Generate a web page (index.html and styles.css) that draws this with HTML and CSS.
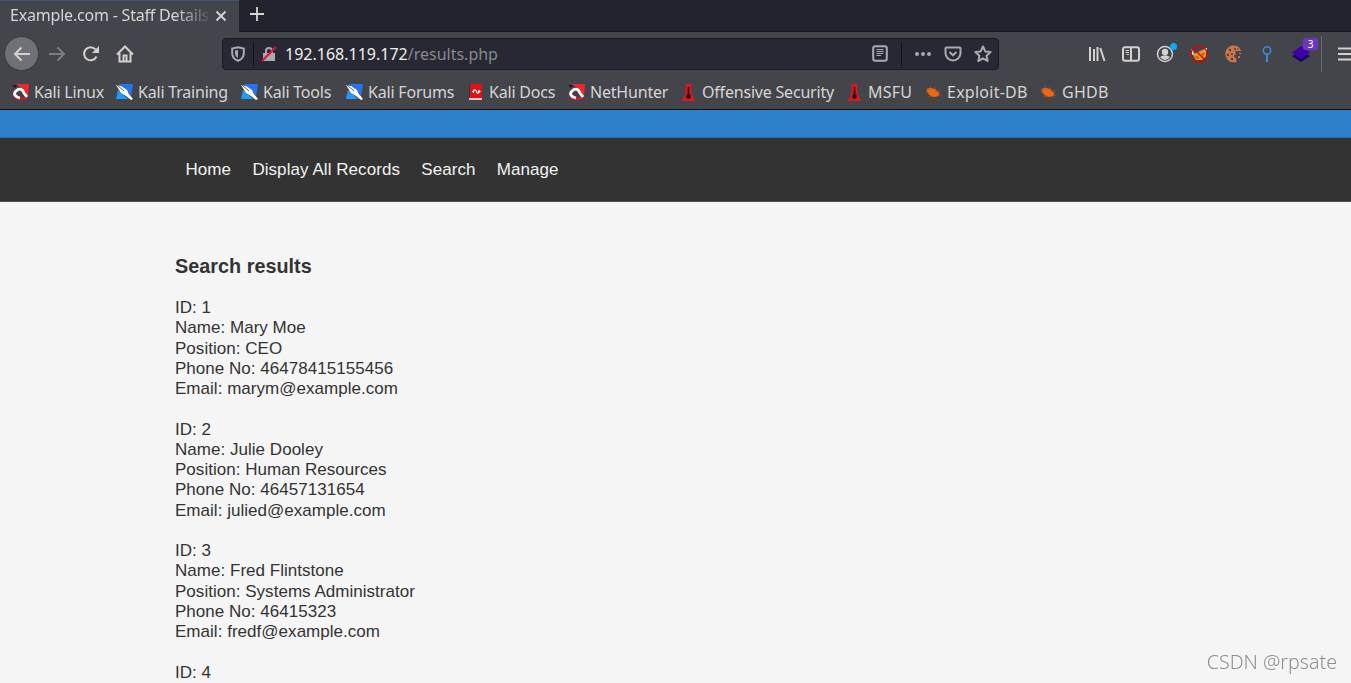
FILE: index.html
```html
<!DOCTYPE html>
<html lang="en">
<head>
    <meta charset="UTF-8">
    <meta name="viewport" content="width=device-width, initial-scale=1.0">
    <title>Example.com - Staff Details</title>
    <link rel="stylesheet" href="styles.css">
</head>
<body>
    <svg class="sprite">
        <symbol id="dragon" viewBox="0 0 17 17">
            <path d="M4 0H17L16 13L12 6Z" fill="#f3262d"/>
            <path d="M0 1L5 1L3 4Z" fill="#3b0d12"/>
            <path d="M1 8C0 13 4 16.500 9 16L16 15L14 12L9 14Z" fill="#cf1630"/>
            <path d="M8 14C3 13 1 10 4 7C8 3 11 6 12 9L15 13" fill="none" stroke="#fff" stroke-width="2.800"/>
            <path d="M6.500 10L11 12.500" stroke="#7b2530" stroke-width="1.200"/>
        </symbol>
        <symbol id="knife" viewBox="0 0 17 17">
            <path d="M3 0H17L15 13L12 8Z" fill="#2773f5"/>
            <path d="M2 6L12 15H0Z" fill="#1f9bff"/>
            <path d="M0 1L5 2L11 6L13 10L17 15L15 16L10 12L5 9Z" fill="#fff"/>
            <path d="M1 1L8 7" stroke="#333" stroke-width=".8" fill="none"/>
            <path d="M12 8L16 13" stroke="#555" stroke-width=".6" fill="none"/>
        </symbol>
        <symbol id="thermo" viewBox="0 0 14 17">
            <path d="M4 0H10V10L14 17H0L4 10Z" fill="#d9181f"/>
            <path d="M7 3V13" stroke="#26080a" stroke-width="1.600"/>
            <circle cx="7" cy="12.500" r="2.300" fill="#26080a"/>
        </symbol>
        <symbol id="bug" viewBox="0 0 16 14">
            <path d="M1 4C5 2 9 3 11 6L14 8L13 11L9 12C5 12 2 9 1 4Z" fill="#f4650f"/>
            <path d="M4 1L7 5M9 2L10 5M0 7L4 8M3 12L7 10M10 5L15 6M12 9L16 11M1 4L5 5" stroke="#a95a2e" stroke-width=".6"/>
        </symbol>
    </svg>

    <div class="browser">
        <div class="tabs">
            <div class="tab">
                <span class="tab-title">Example.com - Staff Details</span>
                <svg class="tab-close" viewBox="0 0 12 12"><path d="M1.500 1.500L10.500 10.500M10.500 1.500L1.500 10.500"/></svg>
            </div>
            <svg class="tab-new" viewBox="0 0 16 16"><path d="M8 1V15M1 8H15"/></svg>
        </div>

        <div class="toolbar">
            <div class="back">
                <svg class="icon" viewBox="0 0 18 18"><path d="M17 9H2M8.500 2.500L2 9L8.500 15.500"/></svg>
            </div>
            <svg class="icon forward" viewBox="0 0 18 18"><path d="M1 9H16M9.500 2.500L16 9L9.500 15.500"/></svg>
            <svg class="icon reload" viewBox="0 0 18 18"><path d="M14.500 11.500A6.500 6.500 0 1 1 13.500 4.500"/><path class="solid" d="M17 1V8H10Z"/></svg>
            <svg class="icon home" viewBox="0 0 18 18"><path d="M1 9.500L9 1.500L17 9.500M3.500 8V16.500H14.500V8M7.500 16V10.500H10.500V16"/></svg>

            <div class="urlbar">
                <svg class="icon shield" viewBox="0 0 14 16"><path d="M7 1.200L12.800 2.500V7C12.800 11 10.500 13.500 7 14.800C3.500 13.500 1.200 11 1.200 7V2.500Z"/><path class="solid" d="M7 4V12C5 11 4 9 4 7V4.600Z"/></svg>
                <span class="divider"></span>
                <svg class="icon lock" viewBox="0 0 16 16"><path d="M5 8V5A3 3 0 0 1 11 5V8"/><path class="solid" d="M2 7H14V15H2Z"/><path class="slash" d="M1 15L15 1"/></svg>
                <span class="url"><b>192.168.119.172</b>/results.php</span>
                <svg class="icon reader" viewBox="0 0 16 17"><rect x="1.200" y="1.200" width="13.600" height="14.600" rx="2"/><path class="thin" d="M4.500 4.500H11.500M4.500 6.500H11.500M4.500 8.500H11.500M4.500 10.500H9"/></svg>
                <span class="divider reader-divider"></span>
                <svg class="icon dots" viewBox="0 0 18 6"><path class="solid" d="M1 3a2 2 0 1 0 4 0a2 2 0 1 0-4 0M7 3a2 2 0 1 0 4 0a2 2 0 1 0-4 0M13 3a2 2 0 1 0 4 0a2 2 0 1 0-4 0"/></svg>
                <svg class="icon pocket" viewBox="0 0 18 16"><path d="M2.500 1.500H15.500Q16.500 1.500 16.500 2.500V7A7.500 7.500 0 0 1 1.500 7V2.500Q1.500 1.500 2.500 1.500ZM5.500 6L9 9.300L12.500 6"/></svg>
                <svg class="icon star" viewBox="0 0 18 18"><path d="M9 1.500L11.300 6.400L16.600 7L12.600 10.700L13.700 16L9 13.400L4.300 16L5.400 10.700L1.400 7L6.700 6.400Z"/></svg>
            </div>

            <div class="extensions">
                <svg class="icon" viewBox="0 0 18 18"><path d="M2 2V16M6 4V16M9.500 2V16M12.300 3L16.500 16"/></svg>
                <svg class="icon" viewBox="0 0 18 18"><rect x="1" y="2.300" width="16" height="13.400" rx="2"/><path d="M9 2V16"/><path class="thin" d="M3.500 5.500H7M3.500 7.500H7M4.500 9.500H7"/></svg>
                <div class="account">
                    <svg class="icon" viewBox="0 0 18 18"><circle cx="9" cy="9" r="7.500" stroke-width="1.500"/><circle class="solid" cx="9" cy="7" r="3.200"/><path class="solid" d="M4 12Q9 8.500 14 12Q12 15 9 15Q6 15 4 12Z"/></svg>
                    <span class="account-dot"></span>
                </div>
                <svg class="icon" viewBox="0 0 18 18"><path d="M3 9L8 7L12 5L15 4L17 7L16 12L12 15L6 15L4 12Z" fill="#e99420" stroke="none"/><path d="M1 4L3 5L4 10L1 9ZM14 3L17 3V8L15 7Z" fill="#ece5dc" stroke="none"/><path d="M4 12L8 11L9 14ZM11 9L15 8L13 11Z" fill="#b65a12" stroke="none"/><circle cx="9" cy="9" r="8" stroke="#c40b0b" stroke-width="1.500"/><path d="M3.500 3.500L14.800 14.800" stroke="#c40b0b" stroke-width="1.500"/></svg>
                <svg class="icon" viewBox="0 0 18 18"><path d="M12 .7A8.500 8.500 0 1 0 12.500 17L12 13L9.500 11L12 9L11 6L17 6Q16 2 12 .7Z" fill="#c8794b" stroke="none"/><path d="M14 11H16V13H14ZM15 8H17V9H15Z" fill="#c8794b" stroke="none"/><g fill="#633721" stroke="none"><circle cx="6" cy="5" r="1.200"/><circle cx="11" cy="4" r="1"/><circle cx="4" cy="10" r="1.200"/><circle cx="8" cy="9" r="1"/><circle cx="8" cy="14" r="1.200"/><circle cx="14" cy="4" r=".7"/></g></svg>
                <svg class="icon" viewBox="0 0 18 18"><circle cx="9" cy="5.500" r="3.700" stroke="#4289dc" stroke-width="1.500"/><path d="M9 9.500V17" stroke="#4289dc"/></svg>
                <div class="layers">
                    <svg class="icon" viewBox="0 0 18 18"><path d="M0 11L9 6L18 11L9 17Z" fill="#180062" stroke="none"/><path d="M0 7.500L9 1L18 7.500L9 14Z" fill="#4300a8" stroke="none"/></svg>
                    <span class="badge">3</span>
                </div>
            </div>
            <span class="menu-divider"></span>
            <svg class="icon menu" viewBox="0 0 18 18"><path d="M1 3.500H17M1 9H17M1 14.500H17"/></svg>
        </div>

        <div class="bookmarks">
            <a class="bookmark"><svg><use href="#dragon"/></svg>Kali Linux</a>
            <a class="bookmark"><svg><use href="#knife"/></svg>Kali Training</a>
            <a class="bookmark"><svg><use href="#knife"/></svg>Kali Tools</a>
            <a class="bookmark"><svg><use href="#knife"/></svg>Kali Forums</a>
            <a class="bookmark"><svg viewBox="0 0 17 17"><path d="M2 0H5V14L2 16Z" fill="#263454"/><path d="M3 0H15V14H3Z" fill="#df1117"/><path d="M2 14H15V16H2Z" fill="#d9c8c6"/><path d="M12 6V8.500Q10.500 10 9.500 8V7Q8 5 6.500 6.500V9M5 7.500H7M11 7.500H13.500" stroke="#fff" stroke-width="1.200" fill="none"/></svg>Kali Docs</a>
            <a class="bookmark"><svg><use href="#dragon"/></svg>NetHunter</a>
            <a class="bookmark"><svg><use href="#thermo"/></svg>Offensive Security</a>
            <a class="bookmark wide"><svg><use href="#thermo"/></svg>MSFU</a>
            <a class="bookmark wide"><svg class="bug"><use href="#bug"/></svg>Exploit-DB</a>
            <a class="bookmark wide"><svg class="bug"><use href="#bug"/></svg>GHDB</a>
        </div>
    </div>

    <header class="banner"></header>
    <nav class="nav">
        <a>Home</a>
        <a>Display All Records</a>
        <a>Search</a>
        <a>Manage</a>
    </nav>

    <main class="results">
        <h3>Search results</h3>
        <p>ID: 1<br>Name: Mary Moe<br>Position: CEO<br>Phone No: 46478415155456<br>Email: marym@example.com</p>
        <p>ID: 2<br>Name: Julie Dooley<br>Position: Human Resources<br>Phone No: 46457131654<br>Email: julied@example.com</p>
        <p>ID: 3<br>Name: Fred Flintstone<br>Position: Systems Administrator<br>Phone No: 46415323<br>Email: fredf@example.com</p>
        <p>ID: 4</p>
    </main>

    <div class="watermark">CSDN @rpsate</div>
</body>
</html>
```
FILE: styles.css
```css
* {
    box-sizing: border-box;
}

body {
    margin: 0;
    height: 683px;
    overflow: hidden;
    background: #f5f5f5;
    color: #333;
    font-family: "Liberation Sans", Arial, sans-serif;
    font-size: 17px;
}

.sprite {
    display: none;
}

.browser {
    height: 110px;
    background: #43454b;
    border-bottom: 1px solid #0c0c0d;
    color: #d6d5d2;
    font-family: "Noto Sans", sans-serif;
    font-size: 16px;
    overflow: hidden;
}

.tabs {
    display: flex;
    height: 32px;
    background: #21232d;
    border-bottom: 1px solid #181a22;
}

.tab {
    display: flex;
    align-items: center;
    width: 239px;
    height: 32px;
    padding-left: 10px;
    background: #43454b;
    border-top: 1px solid #435477;
}

.tab-title {
    width: 200px;
    white-space: nowrap;
    line-height: 27px;
    padding-bottom: 3px;
    letter-spacing: -0.2px;
    -webkit-mask-image: linear-gradient(to right, #000 165px, transparent 203px);
    mask-image: linear-gradient(to right, #000 165px, transparent 203px);
}

.tab-close {
    width: 12px;
    height: 12px;
    margin-left: 5px;
    margin-bottom: 2px;
    stroke: #d6d5d2;
    stroke-width: 1.8;
}

.tab-new {
    width: 16px;
    height: 16px;
    margin: 6px 0 0 10px;
    stroke: #d6d5d2;
    stroke-width: 1.8;
}

.toolbar {
    display: flex;
    align-items: center;
    height: 43px;
    padding-left: 4px;
}

.icon {
    flex: none;
    display: block;
    width: 18px;
    height: 18px;
    fill: none;
    stroke: #d2d1cd;
    stroke-width: 2;
}

.icon .solid {
    fill: #d2d1cd;
    stroke: none;
}

.icon .thin {
    stroke-width: 1;
}

.back {
    display: flex;
    flex: none;
    align-items: center;
    justify-content: center;
    width: 35px;
    height: 35px;
    background: #707176;
    border: 1px solid #36383e;
    border-radius: 50%;
}

.forward {
    margin-left: 9px;
    stroke: #7c7d81;
}

.reload {
    margin-left: 16px;
}

.home {
    margin-left: 16px;
}

.urlbar {
    display: flex;
    flex: none;
    align-items: center;
    width: 777px;
    height: 32px;
    margin-left: 88px;
    padding: 0 6px 0 8px;
    background: #272833;
    border: 1px solid #191a21;
    border-radius: 4px;
}

.urlbar .icon {
    stroke: #a9aaae;
}

.urlbar .icon .solid {
    fill: #a9aaae;
}

.shield {
    width: 14px;
    height: 16px;
}

.divider {
    width: 1px;
    height: 24px;
    margin: 0 7px 0 8px;
    background: #11121a;
}

.lock {
    width: 16px;
    height: 16px;
}

.urlbar .icon .slash {
    stroke: #e50b3e;
}

.url {
    flex: 1;
    margin-left: 8px;
    line-height: 30px;
    color: #89898d;
}

.url b {
    font-weight: normal;
    color: #f0f0ed;
}

.reader {
    width: 16px;
    height: 17px;
}

.reader-divider {
    margin: 0 12px 0 13px;
}

.dots {
    height: 6px;
}

.pocket {
    height: 16px;
    margin-left: 12px;
}

.star {
    margin-left: 12px;
}

.star path {
    stroke-linejoin: round;
}

.extensions {
    display: flex;
    flex: none;
    gap: 16.1px;
    margin-left: 88.5px;
}

.account,
.layers {
    position: relative;
}

.account-dot {
    position: absolute;
    top: -2px;
    right: -3px;
    width: 7px;
    height: 7px;
    background: #00aeff;
    border-radius: 50%;
}

.badge {
    position: absolute;
    top: -7px;
    left: 11px;
    width: 15px;
    height: 12px;
    background: #6b38bd;
    border-radius: 2px;
    color: #fff;
    font-size: 10px;
    line-height: 12px;
    text-align: center;
}

.menu-divider {
    flex: none;
    width: 1px;
    height: 36px;
    margin-left: 11px;
    background: #68696d;
}

.menu {
    margin-left: 15px;
}

.bookmarks {
    display: grid;
    grid-template-columns: 104px 125px 105px 121px 101px 112px 166px 79px 115px auto;
    align-items: center;
    height: 34px;
    padding-left: 12px;
    white-space: nowrap;
}

.bookmark {
    display: flex;
    align-items: center;
    gap: 5px;
    letter-spacing: -0.2px;
}

.bookmark.wide {
    letter-spacing: 0.25px;
}

.bookmark svg {
    flex: none;
    width: 17px;
    height: 17px;
}

.bookmark .bug {
    height: 14px;
}

.banner {
    height: 28px;
    background: #2b80c9;
    border-bottom: 1px solid #276ca6;
}

.nav {
    display: flex;
    align-items: center;
    gap: 21.3px;
    height: 64px;
    padding-left: 185.5px;
    background: #333;
    border-bottom: 1px solid #555050;
    color: #f2f2f2;
    letter-spacing: 0.06px;
}

.results {
    padding: 52px 175px 0;
    line-height: 20.27px;
    letter-spacing: 0.03px;
}

.results h3 {
    margin: 0 0 20px;
    font-size: 19.8px;
    line-height: 24px;
}

.results p {
    margin: 0 0 20.27px;
}

.watermark {
    position: fixed;
    right: 14px;
    bottom: 8px;
    color: #8e8e8e;
    font-family: "Noto Sans", sans-serif;
    font-size: 19.6px;
    font-weight: 300;
    line-height: 26px;
}
```
